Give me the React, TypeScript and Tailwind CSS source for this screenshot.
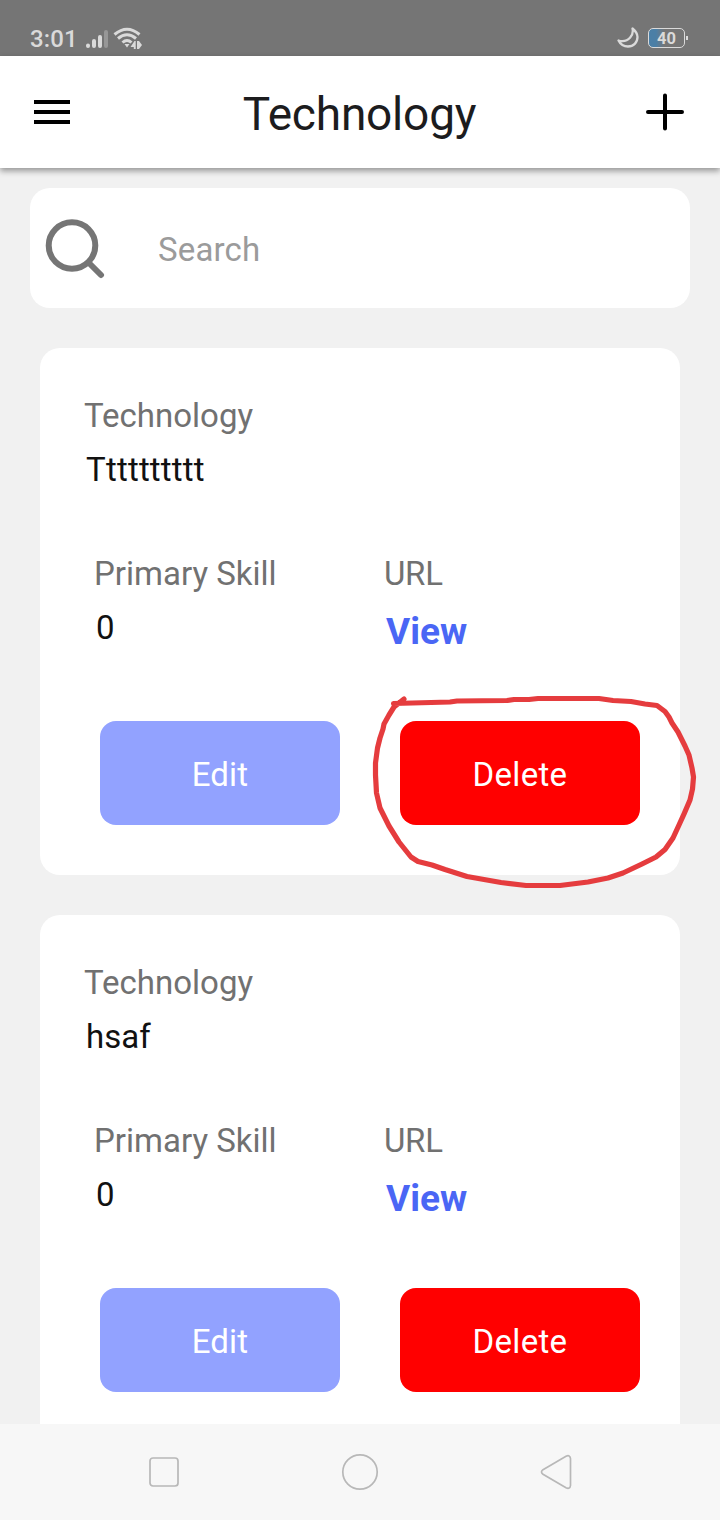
import React from "react";

function StatusBar() {
  return (
    <div className="flex h-14 shrink-0 items-end justify-between bg-[#757575] pl-[30px] pr-8 text-[#dadada]">
      <div className="flex items-end">
        <span className="w-[56px] whitespace-nowrap text-[24px] font-medium leading-[34px] tracking-[0.1px]">3:01</span>
        <svg width="22" height="20" viewBox="0 0 22 20" className="mb-[7px]" fill="none" strokeWidth="4" strokeLinecap="round">
          <path d="M2 16.500v.5M8 12v5M14 8v9" stroke="#dadada" />
          <path d="M20 3v14" stroke="#979797" />
        </svg>
        <svg width="32" height="24" viewBox="0 0 32 24" className="mb-[5px] ml-[5px]" fill="none" stroke="#dadada" strokeWidth="3">
          <path d="M1.500 7.500Q14 -3 26.500 7.500M5 11.500Q14 4 23 11.500M9.500 15.500Q14 11.500 18.500 15.500" />
          <path d="M11.500 17H16.500L14 20.500Z" fill="#dadada" stroke="none" />
          <path d="M22.800 14V22H20.800V20H17.500L21.500 14ZM24 14H26L29 18L26 22H24Z" fill="#dadada" stroke="none" />
          <path d="M23.400 13.500V22.500" stroke="#757575" strokeWidth="1" />
        </svg>
      </div>
      <div className="flex items-end">
        <svg width="24" height="24" viewBox="0 0 24 24" className="mb-[6px] mr-[7px]" fill="none" stroke="#dadada" strokeWidth="2.300" strokeLinejoin="round">
          <path d="M15.500 2.500C18.500 5 20.500 7.500 20.500 11C20.500 16.500 16.500 20.500 11 20.500C7 20.500 3.500 18.500 1.500 14.500C6.500 16 10.500 14.500 13.200 11.500C15.500 9 16.300 6 15.500 2.500Z" />
        </svg>
        <div className="mb-2 flex h-5 w-[37px] items-center justify-center rounded-[5px] border border-[#dadada] bg-linear-to-r from-[#4b7fa6] from-20% to-[#757575] to-45% pt-px text-[16.500px] font-bold leading-[18px]">40</div>
        <span className="mb-4 ml-px h-1 w-0.5 bg-[#dadada]" />
      </div>
    </div>
  );
}

function Header() {
  return (
    <header className="z-10 flex h-28 shrink-0 items-center justify-between bg-white pl-[34px] pr-[35px] shadow-[0_3px_6px_rgba(0,0,0,0.38)]">
      <svg width="36" height="24" viewBox="0 0 36 24" className="mr-[4px]">
        <path d="M0 0H36V4H0ZM0 10H36V14H0ZM0 20H36V24H0Z" />
      </svg>
      <h1 className="pt-[4px] text-[46px] leading-[54px] tracking-[-0.2px] text-[#1c1c1e]">Technology</h1>
      <svg width="40" height="40" viewBox="0 0 40 40" stroke="black" strokeWidth="4" strokeLinecap="round">
        <path d="M20 3.500V36.500M3 20H37" />
      </svg>
    </header>
  );
}

function MarkerCircle() {
  return (
    <svg width="340" height="210" viewBox="365 685 340 210" className="pointer-events-none absolute left-[325px] top-[337px]" fill="none" stroke="#e53c3e" strokeWidth="5.200" strokeLinecap="round" strokeLinejoin="round">
      <path d="M393.500 703.500L450 702L457 701L507 700.500L514 699.500L529 699.500L538 698.500H599L613 700.500L631 701.500L645 704L657 705.500L665 711.500L669 717L672 723L678 732L685 746L689 755L692 768L693.500 777L692.500 789L690 800L684 814L679 825L673 838L665 849.500L656 857L642 864L623 873L608 878L588 882L560 885.500H526L501 882.500L467 876.500L445 869.500L432 865L418 861.500L411 857L399 842L389 826L380 808L376.500 793L375.500 775V763L377.500 748L380 738L383 729L384 724L389 715L394 707L404 699" />
    </svg>
  );
}

const label = "text-[33px] leading-[40px] text-[#717171]";
const value = "text-[33px] leading-[40px] text-[#111]";

function Card({ name, skill, marked = false }: { name: string; skill: string; marked?: boolean }) {
  return (
    <article className="relative h-[527px] shrink-0 rounded-[20px] bg-white px-[44px] pt-[48px]">
      <div className={label}>Technology</div>
      <div className={`mt-[14px] pl-[2px] ${marked ? "tracking-[0.2px]" : "tracking-normal"} ${value}`}>{name}</div>
      <div className="mt-[64px] flex pl-[10px]">
        <div className="w-[290px]">
          <div className={label}>Primary Skill</div>
          <div className={`mt-[14px] pl-[2px] ${value}`}>{skill}</div>
        </div>
        <div>
          <div className={`${label} tracking-[-0.3px]`}>URL</div>
          <a className="mt-[17px] block pl-[2px] text-[37px] font-bold leading-[42px] text-[#4a66f5]">View</a>
        </div>
      </div>
      <div className="-mr-1 mt-[68px] flex justify-between pl-4">
        <button className="h-[104px] w-60 rounded-[16px] bg-[#92a2ff] pt-[3px] text-[33px] tracking-[0.2px] text-white">Edit</button>
        <button className="h-[104px] w-60 rounded-[16px] bg-[#ff0000] pt-[3px] text-[33px] tracking-[0.3px] text-white">Delete</button>
      </div>
      {marked && <MarkerCircle />}
    </article>
  );
}

function NavBar() {
  return (
    <nav className="z-10 flex h-24 shrink-0 items-center justify-between bg-[#f7f7f7] px-[144px]">
      <svg width="40" height="40" fill="none" stroke="#b8b8b8" strokeWidth="1.700">
        <rect x="6" y="6" width="28" height="28" rx="3" />
      </svg>
      <svg width="40" height="40" fill="none" stroke="#b8b8b8" strokeWidth="1.700">
        <circle cx="20" cy="20" r="17.200" />
      </svg>
      <svg width="40" height="40" fill="none" stroke="#b8b8b8" strokeWidth="1.700">
        <path d="M7 17.700L30 4.200Q34 2.500 34.500 6.500V33.500Q34 37.500 30 35.800L7 22.300Q4 20 7 17.700Z" />
      </svg>
    </nav>
  );
}

export default function App() {
  return (
    <div className="flex h-[1520px] w-[720px] flex-col overflow-hidden bg-[#f1f1f1] font-['Roboto',sans-serif]">
      <StatusBar />
      <Header />
      <main className="flex min-h-0 flex-1 flex-col overflow-hidden px-[30px] pt-5">
        <div className="flex h-[120px] shrink-0 items-center rounded-[20px] bg-white pl-[14px]">
          <svg width="62" height="62" viewBox="0 0 62 62" fill="none" stroke="#757575" strokeWidth="6" strokeLinecap="round">
            <circle cx="28" cy="28.500" r="23.300" />
            <path d="M45 46L57 58" />
          </svg>
          <span className="ml-[52px] pt-[3px] text-[33px] leading-10 tracking-[0.15px] text-[#9b9b9b]">Search</span>
        </div>
        <div className="mt-10 flex flex-col gap-10 px-[10px]">
          <Card name="Tttttttttt" skill="0" marked />
          <Card name="hsaf" skill="0" />
        </div>
      </main>
      <NavBar />
    </div>
  );
}
